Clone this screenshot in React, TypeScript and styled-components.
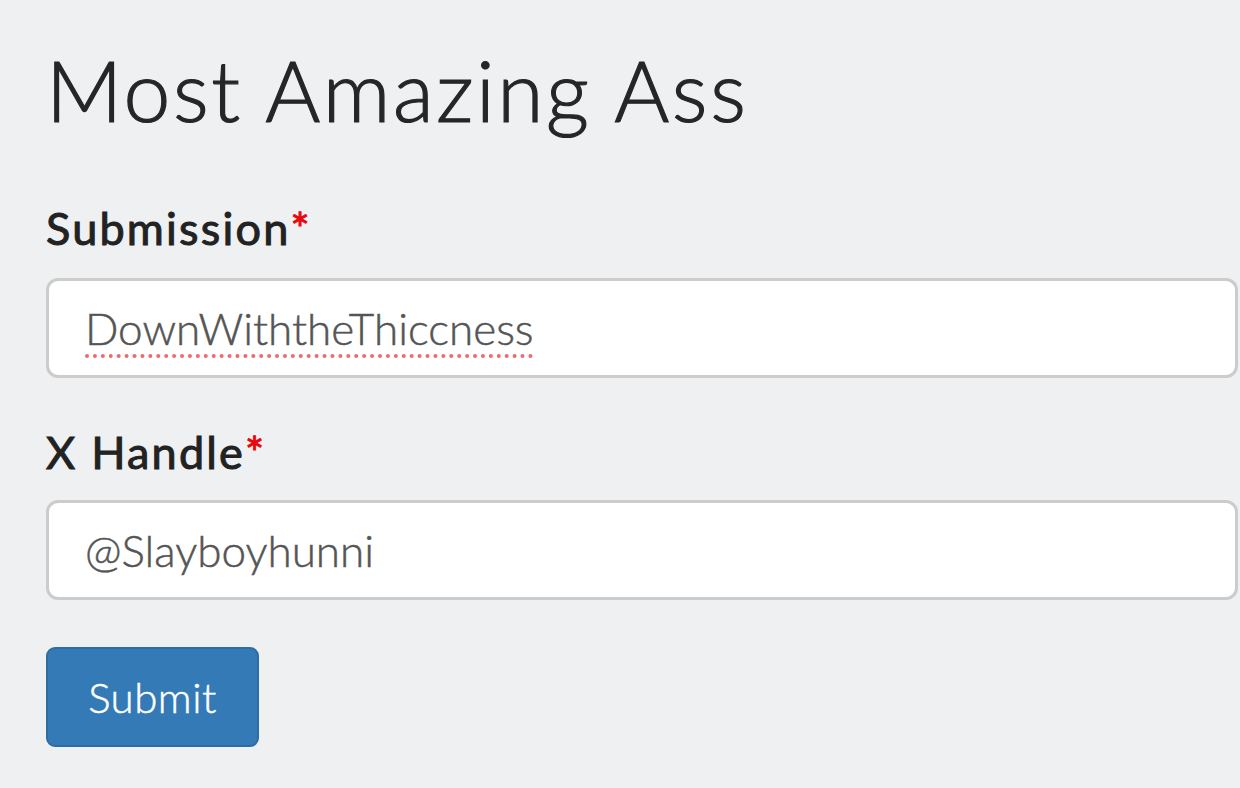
import React from 'react';
import styled, { createGlobalStyle } from "styled-components";

const GlobalStyle = createGlobalStyle`
  html, body {
    margin: 0;
    padding: 0;
    background: #eff0f2;
  }
  body {
    font-family: Lato, "Open Sans", sans-serif;
  }
`

export default function App() {
	return (
		<>
			<GlobalStyle/>
			<Page>
				<Title>Most Amazing Ass</Title>
				<Label $gap={63}>Submission<Required>*</Required></Label>
				<Field $gap={25}>
					<Value $misspelled>DownWiththeThiccness</Value>
				</Field>
				<Label $gap={49}>X Handle<Required>*</Required></Label>
				<Field $gap={23}>
					<Value>@Slayboyhunni</Value>
				</Field>
				<SubmitButton type="button">Submit</SubmitButton>
			</Page>
		</>
	);
}

const Page = styled.div`
  min-height: 788px;
  box-sizing: border-box;
  padding: 40px 2px 0 46px;
  display: flex;
  flex-direction: column;
  align-items: stretch;
`
const Title = styled.h1`
  margin: 0;
  color: #262626;
  font-size: 84px;
  font-weight: 300;
  line-height: 100px;
  letter-spacing: 2.6px;
  -webkit-text-stroke: 1.2px #262626;
`
const Label = styled.label<{ $gap: number }>`
  display: block;
  margin-top: ${p => p.$gap}px;
  color: #222;
  font-size: 45px;
  font-weight: 400;
  line-height: 50px;
  letter-spacing: 2.2px;
  -webkit-text-stroke: 1px #222;
`
const Required = styled.span`
  color: #e8060c;
  letter-spacing: 0;
  -webkit-text-stroke: 1px #e8060c;
`
const Field = styled.div<{ $gap: number }>`
  margin-top: ${p => p.$gap}px;
  height: 100px;
  box-sizing: border-box;
  background: #fff;
  border: 3px solid #cccccc;
  border-radius: 12px;
  padding: 0 36px;
  display: flex;
  align-items: center;
`
const Value = styled.span<{ $misspelled?: boolean }>`
  color: #555;
  font-size: 44px;
  font-weight: 300;
  line-height: 1;
  -webkit-text-stroke: 0.5px #555;
  text-decoration: ${p => p.$misspelled ? "underline dotted #ee6b6b" : "none"};
  text-decoration-thickness: 4px;
  text-underline-offset: 9px;
`
const SubmitButton = styled.button`
  align-self: flex-start;
  margin-top: 47px;
  width: 213px;
  height: 100px;
  background: #337ab7;
  border: 2px solid #2e6da4;
  border-radius: 9px;
  color: #fff;
  font-family: Lato, "Open Sans", sans-serif;
  font-size: 42px;
  font-weight: 300;
  letter-spacing: 0.5px;
  -webkit-text-stroke: 0.5px #fff;
  padding: 0;
`
